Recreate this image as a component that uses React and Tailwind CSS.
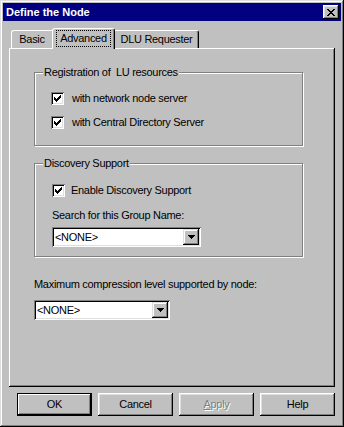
import React from "react";

const font = { fontFamily: '"Liberation Sans", Arial, sans-serif' };

function CheckMark() {
  // pixel-style win95 check
  const px = [
    [6, 0], [5, 1], [6, 1], [0, 2], [4, 2], [5, 2], [6, 2],
    [0, 3], [1, 3], [3, 3], [4, 3], [5, 3],
    [0, 4], [1, 4], [2, 4], [3, 4], [4, 4],
    [1, 5], [2, 5], [3, 5], [2, 6],
  ];
  return (
    <svg width="7" height="7" viewBox="0 0 7 7" shapeRendering="crispEdges">
      {px.map(([x, y]) => (
        <rect key={`${x}-${y}`} x={x} y={y} width="1" height="1" fill="#000" />
      ))}
    </svg>
  );
}

function CloseGlyph() {
  const rows = ["XX....XX", ".XX..XX.", "..XXXX..", "...XX...", "..XXXX..", ".XX..XX.", "XX....XX"];
  return (
    <svg width="8" height="7" viewBox="0 0 8 7" shapeRendering="crispEdges">
      {rows.flatMap((r, y) =>
        r.split("").map((c, x) =>
          c === "X" ? <rect key={`${x}-${y}`} x={x} y={y} width="1" height="1" fill="#000" /> : null
        )
      )}
    </svg>
  );
}

function Checkbox({ label, gap = "gap-[8px]" }) {
  return (
    <div className={`flex items-center ${gap} h-[13px]`}>
      <div className="w-[13px] h-[13px] bg-white flex items-center justify-center shadow-[inset_1px_1px_#808080,inset_-1px_-1px_#fff,inset_2px_2px_#000,inset_-2px_-2px_#dfdfdf]">
        <CheckMark />
      </div>
      <span className="text-[11px] leading-[13px] tracking-[-0.3px] text-black whitespace-nowrap">{label}</span>
    </div>
  );
}

function Combo({ width }) {
  return (
    <div
      className={`${width} h-[20px] bg-white flex items-center p-[2px] shadow-[inset_1px_1px_#808080,inset_-1px_-1px_#fff,inset_2px_2px_#000,inset_-2px_-2px_#dfdfdf]`}
    >
      <span className="flex-1 text-[11px] leading-[13px] tracking-[-0.3px] text-black pl-[1px]">&lt;NONE&gt;</span>
      <div className="w-[16px] h-[16px] bg-[#c0c0c0] flex items-center justify-center shadow-[inset_-1px_-1px_#000,inset_1px_1px_#dfdfdf,inset_-2px_-2px_#808080,inset_2px_2px_#fff]">
        <svg width="7" height="4" viewBox="0 0 7 4" shapeRendering="crispEdges">
          <rect x="0" y="0" width="7" height="1" fill="#000" />
          <rect x="1" y="1" width="5" height="1" fill="#000" />
          <rect x="2" y="2" width="3" height="1" fill="#000" />
          <rect x="3" y="3" width="1" height="1" fill="#000" />
        </svg>
      </div>
    </div>
  );
}

function GroupBox({ title, height, children, pad }) {
  return (
    <div className={`relative w-[269px] ${height} border border-[#808080] shadow-[inset_1px_1px_#fff,1px_1px_#fff] ${pad}`}>
      <span className="absolute -top-[7px] left-[8px] px-[1px] bg-[#c0c0c0] text-[11px] leading-[13px] tracking-[-0.3px] text-black whitespace-pre">
        {title}
      </span>
      {children}
    </div>
  );
}

function Button({ children, isDefault, disabled }) {
  const frame = isDefault
    ? "border border-black shadow-[inset_-1px_-1px_#000,inset_1px_1px_#fff,inset_-2px_-2px_#808080]"
    : "shadow-[inset_-1px_-1px_#000,inset_1px_1px_#fff,inset_-2px_-2px_#808080,inset_2px_2px_#dfdfdf]";
  return (
    <div className={`w-[75px] h-[23px] bg-[#c0c0c0] flex items-center justify-center ${frame}`}>
      <span
        className={`text-[11px] leading-[13px] tracking-[-0.3px] ${
          disabled ? "text-[#808080] [text-shadow:1px_1px_0_#fff]" : "text-black"
        }`}
      >
        {children}
      </span>
    </div>
  );
}

export default function App() {
  return (
    <div
      style={font}
      className="w-[344px] h-[427px] bg-[#c0c0c0] p-[3px] flex flex-col shadow-[inset_-1px_-1px_#000,inset_1px_1px_#dfdfdf,inset_-2px_-2px_#808080,inset_2px_2px_#fff]"
    >
      {/* title bar */}
      <div className="h-[18px] bg-[#000080] flex items-center justify-between pl-[3px] pr-[2px]">
        <span className="text-white text-[11px] font-bold leading-[13px]">Define the Node</span>
        <div className="w-[16px] h-[14px] bg-[#c0c0c0] flex items-center justify-center shadow-[inset_-1px_-1px_#000,inset_1px_1px_#fff,inset_-2px_-2px_#808080,inset_2px_2px_#dfdfdf]">
          <CloseGlyph />
        </div>
      </div>

      {/* tabs */}
      <div className="mt-[7px] ml-[8px] flex items-end h-[20px] relative z-10 tracking-[-0.3px]">
        <div className="w-[41px] h-[18px] flex items-center justify-center border-t border-l border-white rounded-tl-[3px] text-[11px] leading-[13px] text-black">
          Basic
        </div>
        <div className="w-[63px] h-[21px] -mb-[1px] bg-[#c0c0c0] flex items-start justify-center pt-[1px] border-t border-l border-white border-r border-r-black rounded-t-[3px] shadow-[inset_-1px_0_#808080]">
          <span className="px-[3px] py-[1px] border border-dotted border-black text-[11px] leading-[13px] text-black">
            Advanced
          </span>
        </div>
        <div className="w-[84px] h-[18px] flex items-center justify-center border-t border-white border-r border-r-black rounded-tr-[3px] shadow-[inset_-1px_0_#808080] text-[11px] leading-[13px] text-black">
          DLU Requester
        </div>
      </div>

      {/* panel */}
      <div className="ml-[6px] w-[326px] h-[339px] flex flex-col pl-[25px] pt-[24px] shadow-[inset_-1px_-1px_#000,inset_1px_1px_#fff,inset_-2px_-2px_#808080]">
        <GroupBox title="Registration of  LU resources" height="h-[74px]" pad="pl-[16px] pt-[19px]">
          <div className="flex flex-col gap-[11px]">
            <Checkbox label="with network node server" />
            <Checkbox label="with Central Directory Server" />
          </div>
        </GroupBox>

        <div className="mt-[17px]">
          <GroupBox title="Discovery Support" height="h-[94px]" pad="pl-[17px] pt-[20px]">
            <Checkbox label="Enable Discovery Support" gap="gap-[6px]" />
            <div className="mt-[12px] text-[11px] leading-[13px] tracking-[-0.3px] text-black">
              Search for this Group Name:
            </div>
            <div className="mt-[5px]">
              <Combo width="w-[149px]" />
            </div>
          </GroupBox>
        </div>

        <div className="mt-[21px] text-[11px] leading-[13px] tracking-[-0.3px] text-black">
          Maximum compression level supported by node:
        </div>
        <div className="mt-[9px]">
          <Combo width="w-[136px]" />
        </div>
      </div>

      {/* buttons */}
      <div className="mt-[6px] ml-[14px] flex gap-[6px]">
        <Button isDefault>OK</Button>
        <Button>Cancel</Button>
        <Button disabled>
          <span className="underline">A</span>pply
        </Button>
        <Button>Help</Button>
      </div>
    </div>
  );
}
